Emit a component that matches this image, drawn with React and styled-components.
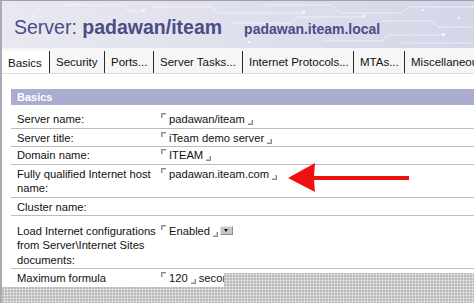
import React from 'react'
import styled, { createGlobalStyle } from 'styled-components'

const GlobalStyle = createGlobalStyle`
  html, body {
    margin: 0;
    padding: 0;
    background: #fff;
  }
  body {
    font-family: "Liberation Sans", Arial, sans-serif;
    color: #111;
  }
`;

const tabs = [
    { label: 'Basics', width: 48, active: true },
    { label: 'Security', width: 55 },
    { label: 'Ports...', width: 49 },
    { label: 'Server Tasks...', width: 89 },
    { label: 'Internet Protocols...', width: 111 },
    { label: 'MTAs...', width: 51 },
    { label: 'Miscellaneous' },
]

export default function App() {
    return (
        <>
            <GlobalStyle />
            <Page>
                <Header>
                    <Circuit width="474" height="47" viewBox="0 0 474 47">
                        <g stroke="#ffffff" strokeOpacity="0.55" fill="none" strokeWidth="1">
                            <path d="M150 6 H210 L216 12 H300" />
                            <path d="M260 4 H330 L338 12 H400 L406 6 H474" />
                            <path d="M230 22 H290 L296 16 H360" />
                            <path d="M380 20 H430 L436 26 H474" />
                            <path d="M320 40 H380 L386 34 H440" />
                            <path d="M60 4 H120 L126 10 H140" />
                            <path d="M400 42 H474" />
                        </g>
                        <g fill="#ffffff" fillOpacity="0.7">
                            <rect x="300" y="10" width="3" height="3" />
                            <rect x="360" y="14" width="3" height="3" />
                            <rect x="440" y="32" width="3" height="3" />
                            <rect x="140" y="8" width="3" height="3" />
                            <rect x="180" y="26" width="2" height="2" />
                            <rect x="96" y="30" width="2" height="2" />
                            <rect x="30" y="14" width="2" height="2" />
                            <rect x="420" y="8" width="2" height="2" />
                            <rect x="456" y="16" width="2" height="2" />
                            <rect x="246" y="40" width="2" height="2" />
                        </g>
                    </Circuit>
                    <TitleLabel>Server: </TitleLabel>
                    <TitleName>padawan/iteam</TitleName>
                    <HostName>padawan.iteam.local</HostName>
                </Header>

                <TabBar>
                    {tabs.map((t) => (
                        <Tab key={t.label} $width={t.width} $active={t.active}>
                            {t.label}
                        </Tab>
                    ))}
                </TabBar>

                <Panel>
                    <SectionHead>Basics</SectionHead>
                    <Row $top={7}>
                        <Label>Server name:</Label>
                        <Value><FieldStart />padawan/iteam<FieldEnd /></Value>
                    </Row>
                    <Row $top={2}>
                        <Label>Server title:</Label>
                        <Value><FieldStart />iTeam demo server<FieldEnd /></Value>
                    </Row>
                    <Row $top={1}>
                        <Label>Domain name:</Label>
                        <Value><FieldStart />ITEAM<FieldEnd /></Value>
                    </Row>
                    <Row $top={2}>
                        <Label>Fully qualified Internet host name:</Label>
                        <Value><FieldStart />padawan.iteam.com<FieldEnd /></Value>
                    </Row>
                    <Row $top={2}>
                        <Label>Cluster name:</Label>
                        <Value />
                    </Row>
                    <Row $top={7.5}>
                        <Label>Load Internet configurations from Server\Internet Sites documents:</Label>
                        <Value>
                            <FieldStart />Enabled<FieldEnd />
                            <DropButton />
                        </Value>
                    </Row>
                    <Row $top={2}>
                        <Label>Maximum formula computation time:</Label>
                        <Value><FieldStart />120<FieldEnd /> seconds</Value>
                    </Row>
                </Panel>

                <Arrow width="126" height="34" viewBox="0 0 126 34">
                    <path d="M2 17 L29 2 L28 15 H123 V19 H28 L29 31 Z" fill="#ee1111" />
                </Arrow>

                <Dither />
            </Page>
        </>
    )
}

const Page = styled.div`
    position: relative;
    width: 474px;
    height: 303px;
    box-sizing: border-box;
    border-left: 2px solid #a8a9b6;
    overflow: hidden;
    background: #fff;
`;

const Header = styled.div`
    position: relative;
    height: 48px;
    box-sizing: border-box;
    border-top: 1px solid #9d9eae;
    padding: 17px 0 0 12px;
    display: flex;
    align-items: baseline;
    background: linear-gradient(90deg, #e8e8f1 0%, #e2e3ee 35%, #d4d6e8 100%);
    color: #4b4c86;
    white-space: nowrap;
`;

const Circuit = styled.svg`
    position: absolute;
    left: 0;
    top: 0;
`;

const TitleLabel = styled.span`
    position: relative;
    font-size: 19.5px;
    line-height: 19.5px;
    white-space: pre;
`;

const TitleName = styled.span`
    position: relative;
    font-size: 19.5px;
    line-height: 19.5px;
    font-weight: 700;
`;

const HostName = styled.span`
    position: relative;
    font-size: 14px;
    font-weight: 700;
    margin-left: 22px;
`;

const TabBar = styled.div`
    display: flex;
    height: 26px;
    box-sizing: border-box;
    background: #f6f6f6;
    border-bottom: 1px solid #dcdcdc;
    white-space: nowrap;
    overflow: hidden;
`;

const Tab = styled.div`
    ${(p) => (p.$width ? `width: ${p.$width}px;` : 'flex: 1;')}
    flex-shrink: 0;
    box-sizing: border-box;
    margin-top: 3px;
    padding-left: 6px;
    display: flex;
    align-items: center;
    font-size: 11.5px;
    color: #111;
    border-right: ${(p) => (p.$width ? '1px solid #2b2b2b' : 'none')};
    background: ${(p) => (p.$active ? '#fff' : 'transparent')};
    margin-bottom: ${(p) => (p.$active ? '-1px' : '0')};
`;

const Panel = styled.div`
    margin: 15px 0 0 9px;
`;

const SectionHead = styled.div`
    height: 16px;
    line-height: 16px;
    padding-left: 6px;
    background: #aaacd0;
    color: #fff;
    font-size: 11px;
    font-weight: 700;
`;

const Row = styled.div`
    display: grid;
    grid-template-columns: 150px 1fr;
    padding: ${(p) => p.$top}px 0 1px;
    border-bottom: 1px solid #bcbcbc;
    font-size: 11.2px;
    line-height: 14.5px;
`;

const Label = styled.div`
    padding-left: 6px;
    padding-right: 4px;
`;

const Value = styled.div`
    white-space: nowrap;
    height: ${(p) => (p.children ? 'auto' : '14.5px')};
`;

const FieldStart = styled.span`
    display: inline-block;
    width: 4px;
    height: 4px;
    margin-right: 3px;
    border-left: 1px solid #8c8c8c;
    border-top: 1px solid #8c8c8c;
    box-shadow: inset 1px 1px 0 #c8c8c8;
    vertical-align: 5px;
`;

const FieldEnd = styled.span`
    display: inline-block;
    width: 4px;
    height: 4px;
    margin-left: 3px;
    border-right: 1px solid #8c8c8c;
    border-bottom: 1px solid #8c8c8c;
    box-shadow: inset -1px -1px 0 #c8c8c8;
    vertical-align: -2px;
`;

const DropButton = styled.span`
    display: inline-block;
    width: 11px;
    height: 7px;
    margin-left: 2px;
    vertical-align: 0px;
    background: #c6c6c6;
    border-top: 1px solid #e6e6e6;
    border-left: 1px solid #e6e6e6;
    border-bottom: 1px solid #8a8a8a;
    border-right: 1px solid #8a8a8a;
    position: relative;
    &::after {
        content: '';
        position: absolute;
        left: 3px;
        top: 2px;
        border-left: 2.5px solid transparent;
        border-right: 2.5px solid transparent;
        border-top: 3px solid #111;
    }
`;

const Arrow = styled.svg`
    position: absolute;
    left: 284px;
    top: 161px;
`;

const Dither = styled.div`
    position: absolute;
    left: -2px;
    right: 0;
    bottom: 0;
    height: 30px;
    background-color: #bdbdbd;
    background-image: radial-gradient(circle, #f2f2f2 0.8px, transparent 1.1px);
    background-size: 3px 3px;
    clip-path: polygon(224px 0, 100% 0, 100% 100%, 0 100%, 0 14px, 224px 14px);
`;
